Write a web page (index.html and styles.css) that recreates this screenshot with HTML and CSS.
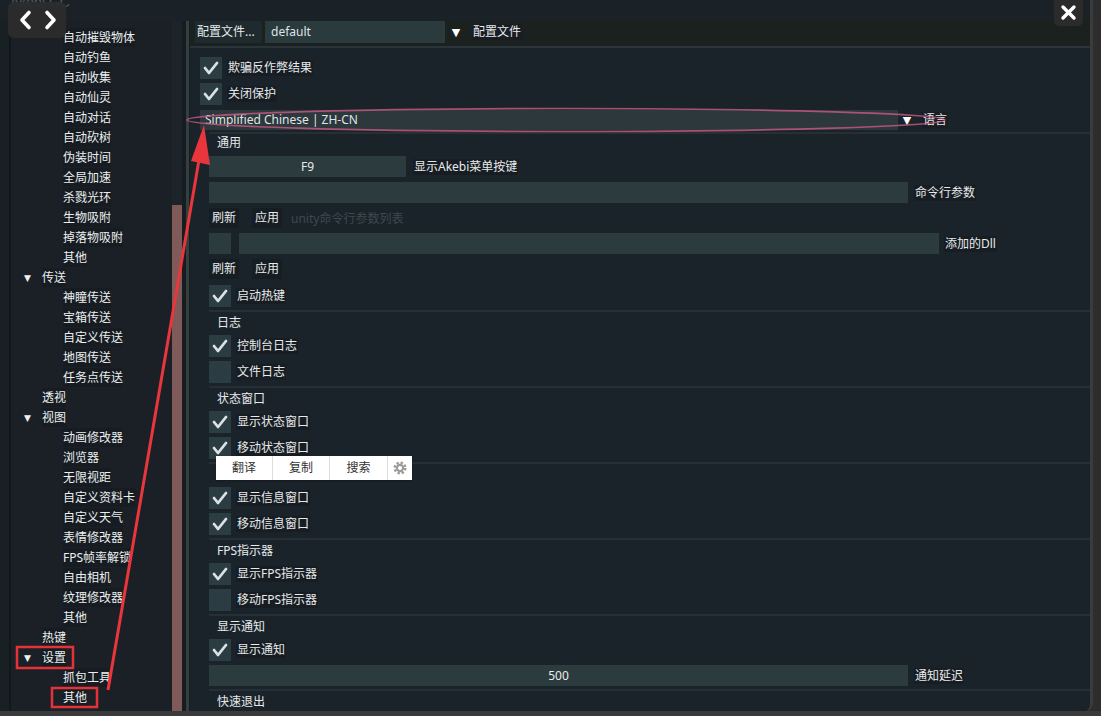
FILE: index.html
```html
<!DOCTYPE html>
<html lang="zh-CN">
<head>
<meta charset="utf-8">
<title>Akebi GC</title>
<link rel="stylesheet" href="styles.css">
</head>
<body>
<div class="window">
  <div class="titlebar"></div>
  <div class="main">
    <aside class="sidebar">
      <ul class="tree">
        <li class="l2"><span class="t">自动摧毁物体</span></li>
        <li class="l2"><span class="t">自动钓鱼</span></li>
        <li class="l2"><span class="t">自动收集</span></li>
        <li class="l2"><span class="t">自动仙灵</span></li>
        <li class="l2"><span class="t">自动对话</span></li>
        <li class="l2"><span class="t">自动砍树</span></li>
        <li class="l2"><span class="t">伪装时间</span></li>
        <li class="l2"><span class="t">全局加速</span></li>
        <li class="l2"><span class="t">杀戮光环</span></li>
        <li class="l2"><span class="t">生物吸附</span></li>
        <li class="l2"><span class="t">掉落物吸附</span></li>
        <li class="l2"><span class="t">其他</span></li>
        <li class="l1"><span class="tri">▼</span><span class="t">传送</span></li>
        <li class="l2"><span class="t">神瞳传送</span></li>
        <li class="l2"><span class="t">宝箱传送</span></li>
        <li class="l2"><span class="t">自定义传送</span></li>
        <li class="l2"><span class="t">地图传送</span></li>
        <li class="l2"><span class="t">任务点传送</span></li>
        <li class="l1 leaf"><span class="t">透视</span></li>
        <li class="l1"><span class="tri">▼</span><span class="t">视图</span></li>
        <li class="l2"><span class="t">动画修改器</span></li>
        <li class="l2"><span class="t">浏览器</span></li>
        <li class="l2"><span class="t">无限视距</span></li>
        <li class="l2"><span class="t">自定义资料卡</span></li>
        <li class="l2"><span class="t">自定义天气</span></li>
        <li class="l2"><span class="t">表情修改器</span></li>
        <li class="l2"><span class="t">FPS帧率解锁</span></li>
        <li class="l2"><span class="t">自由相机</span></li>
        <li class="l2"><span class="t">纹理修改器</span></li>
        <li class="l2"><span class="t">其他</span></li>
        <li class="l1 leaf"><span class="t">热键</span></li>
        <li class="l1"><span class="tri">▼</span><span class="t">设置</span></li>
        <li class="l2"><span class="t">抓包工具</span></li>
        <li class="l2 sel"><span class="t">其他</span></li>
      </ul>
    </aside>
    <div class="scroll"><div class="thumb"></div></div>
    <div class="splitter"></div>
    <section class="panel">
      <div class="profile-row">
        <span class="btn-dark">配置文件...</span>
        <span class="combo profile">default</span>
        <span class="arrow">▼</span>
        <span class="lbl">配置文件</span>
      </div>
      <div class="content">
        <div class="rows top">
          <div class="cb"><span class="box"><svg width="22" height="22" viewBox="0 0 22 22"><polyline points="5,11 9,16 17,6" fill="none" stroke="#dbe2e5" stroke-width="2.8" stroke-linecap="round" stroke-linejoin="round"/></svg></span><span class="lbl">欺骗反作弊结果</span></div>
          <div class="cb"><span class="box"><svg width="22" height="22" viewBox="0 0 22 22"><polyline points="5,11 9,16 17,6" fill="none" stroke="#dbe2e5" stroke-width="2.8" stroke-linecap="round" stroke-linejoin="round"/></svg></span><span class="lbl">关闭保护</span></div>
        </div>
        <div class="langrow">
          <span class="combo lang">Simplified Chinese | ZH-CN</span>
          <span class="arrow small">▼</span>
          <span class="lbl">语言</span>
        </div>

        <div class="sec general">
          <h3>通用</h3>
          <div class="rows g5">
            <div class="line">
              <span class="inp f9">F9</span><span class="lbl ml7">显示Akebi菜单按键</span>
            </div>
            <div class="line">
              <span class="inp wide"></span><span class="lbl ml6">命令行参数</span>
            </div>
            <div class="btnrow">
              <span class="btn">刷新</span><span class="btn">应用</span><span class="ph">unity命令行参数列表</span>
            </div>
            <div class="line">
              <span class="inp sq"></span><span class="inp wide2"></span><span class="lbl ml5">添加的Dll</span>
            </div>
            <div class="btnrow">
              <span class="btn">刷新</span><span class="btn">应用</span>
            </div>
            <div class="cb mt1"><span class="box"><svg width="22" height="22" viewBox="0 0 22 22"><polyline points="5,11 9,16 17,6" fill="none" stroke="#dbe2e5" stroke-width="2.8" stroke-linecap="round" stroke-linejoin="round"/></svg></span><span class="lbl">启动热键</span></div>
          </div>
        </div>

        <div class="sec">
          <h3>日志</h3>
          <div class="rows">
            <div class="cb"><span class="box"><svg width="22" height="22" viewBox="0 0 22 22"><polyline points="5,11 9,16 17,6" fill="none" stroke="#dbe2e5" stroke-width="2.8" stroke-linecap="round" stroke-linejoin="round"/></svg></span><span class="lbl">控制台日志</span></div>
            <div class="cb"><span class="box"></span><span class="lbl">文件日志</span></div>
          </div>
        </div>

        <div class="sec">
          <h3>状态窗口</h3>
          <div class="rows">
            <div class="cb"><span class="box"><svg width="22" height="22" viewBox="0 0 22 22"><polyline points="5,11 9,16 17,6" fill="none" stroke="#dbe2e5" stroke-width="2.8" stroke-linecap="round" stroke-linejoin="round"/></svg></span><span class="lbl">显示状态窗口</span></div>
            <div class="cb"><span class="box"><svg width="22" height="22" viewBox="0 0 22 22"><polyline points="5,11 9,16 17,6" fill="none" stroke="#dbe2e5" stroke-width="2.8" stroke-linecap="round" stroke-linejoin="round"/></svg></span><span class="lbl">移动状态窗口</span></div>
          </div>
        </div>

        <div class="sec">
          <h3></h3>
          <div class="rows">
            <div class="cb"><span class="box"><svg width="22" height="22" viewBox="0 0 22 22"><polyline points="5,11 9,16 17,6" fill="none" stroke="#dbe2e5" stroke-width="2.8" stroke-linecap="round" stroke-linejoin="round"/></svg></span><span class="lbl">显示信息窗口</span></div>
            <div class="cb"><span class="box"><svg width="22" height="22" viewBox="0 0 22 22"><polyline points="5,11 9,16 17,6" fill="none" stroke="#dbe2e5" stroke-width="2.8" stroke-linecap="round" stroke-linejoin="round"/></svg></span><span class="lbl">移动信息窗口</span></div>
          </div>
        </div>

        <div class="sec">
          <h3>FPS指示器</h3>
          <div class="rows">
            <div class="cb"><span class="box"><svg width="22" height="22" viewBox="0 0 22 22"><polyline points="5,11 9,16 17,6" fill="none" stroke="#dbe2e5" stroke-width="2.8" stroke-linecap="round" stroke-linejoin="round"/></svg></span><span class="lbl">显示FPS指示器</span></div>
            <div class="cb"><span class="box"></span><span class="lbl">移动FPS指示器</span></div>
          </div>
        </div>

        <div class="sec">
          <h3>显示通知</h3>
          <div class="rows">
            <div class="cb"><span class="box"><svg width="22" height="22" viewBox="0 0 22 22"><polyline points="5,11 9,16 17,6" fill="none" stroke="#dbe2e5" stroke-width="2.8" stroke-linecap="round" stroke-linejoin="round"/></svg></span><span class="lbl">显示通知</span></div>
            <div class="line">
              <span class="inp wide num">500</span><span class="lbl ml6">通知延迟</span>
            </div>
          </div>
        </div>

        <div class="sec">
          <h3>快速退出</h3>
        </div>
      </div>
    </section>
  </div>
</div>
<div class="bottombar"></div>

<div class="title-ghost">Akebi GC</div>
<div class="navbox">
  <svg width="58" height="36" viewBox="0 0 58 36">
    <polyline points="21,10.5 14,18 21,25.5" fill="none" stroke="#ffffff" stroke-width="3.6" stroke-linecap="round" stroke-linejoin="round"/>
    <polyline points="39,10.5 46,18 39,25.5" fill="none" stroke="#ffffff" stroke-width="3.6" stroke-linecap="round" stroke-linejoin="round"/>
  </svg>
</div>
<div class="closebtn">
  <svg width="29" height="26" viewBox="0 0 29 26">
    <line x1="9" y1="7" x2="20" y2="18" stroke="#ffffff" stroke-width="3.4" stroke-linecap="round"/>
    <line x1="20" y1="7" x2="9" y2="18" stroke="#ffffff" stroke-width="3.4" stroke-linecap="round"/>
  </svg>
</div>

<div class="ctxmenu">
  <span class="mi">翻译</span>
  <span class="mi">复制</span>
  <span class="mi w58">搜索</span>
  <span class="mi gear">
    <svg width="14" height="14" viewBox="0 0 14 14">
      <circle cx="7" cy="7" r="5.2" fill="none" stroke="#9c9c9c" stroke-width="2.6" stroke-dasharray="2.3 1.78"/>
      <circle cx="7" cy="7" r="4.2" fill="#9c9c9c"/>
      <circle cx="7" cy="7" r="2" fill="#ffffff"/>
    </svg>
  </span>
</div>

<svg class="annot" width="1101" height="716" viewBox="0 0 1101 716">
  <ellipse cx="566" cy="120" rx="379" ry="11.5" fill="none" stroke="#c0587f" stroke-width="1.6" opacity="0.85"/>
  <rect x="17" y="647" width="56" height="21" fill="none" stroke="#e53238" stroke-width="2.5"/>
  <rect x="52" y="688" width="45" height="19" fill="none" stroke="#e53238" stroke-width="2.5"/>
  <line x1="108" y1="690" x2="199" y2="160" stroke="#e8363c" stroke-width="3"/>
  <polygon points="204,125 210,165 191,161" fill="#e8363c"/>
</svg>
</body>
</html>
```

FILE: styles.css
```css
* { box-sizing: border-box; margin: 0; padding: 0; }

html, body { width: 1101px; height: 716px; }

body {
  background: #2d2d2d;
  overflow: hidden;
  position: relative;
  font-family: "Noto Sans", "Noto Sans CJK SC", sans-serif;
  font-size: 12px;
  color: #e6eaec;
}

.window {
  width: 1093px;
  height: 711px;
  background: #1b2329;
  border-right: 3px solid #3b3b3b;
  border-bottom-right-radius: 8px;
  display: flex;
  flex-direction: column;
  overflow: hidden;
}

.bottombar { height: 5px; background: #3a3a3a; }

.titlebar { height: 21px; flex: none; background: #1b2227; }

.main { flex: 1; display: flex; min-height: 0; }

/* sidebar tree */
.sidebar {
  width: 172px;
  flex: none;
  background: #1a2026;
  padding-top: 7px;
  box-shadow: inset 9px 0 0 #192024, inset 11px 0 0 #11171b;
}
.tree { list-style: none; }
.tree li { height: 20px; line-height: 20px; white-space: nowrap; }
.tree .l2 { padding-left: 63px; }
.tree .l1 { padding-left: 24px; }
.tree .l1.leaf { padding-left: 42px; }
.tree .tri { display: inline-block; width: 18px; font-size: 9px; font-family: "DejaVu Sans", sans-serif; color: #f0f0f0; vertical-align: top; }
.tree .t { background: #161c21; padding: 1px 0; color: #eceff0; }

.scroll { width: 10px; flex: none; background: #1d2429; display: flex; flex-direction: column; }
.scroll .thumb { margin-top: 184px; flex: 1; background: #7e5a59; }

.splitter {
  width: 8px;
  flex: none;
  background: linear-gradient(to right, #161c20 0 4px, #34403d 4px 7px, #161c20 7px);
}

/* main panel */
.panel { flex: 1; background: #1b232a; display: flex; flex-direction: column; min-width: 0; }

.profile-row {
  height: 27px;
  flex: none;
  padding: 1px 0 4px 5px;
  display: flex;
  align-items: center;
  background: #1a211f;
  border-bottom: 2px solid #2b343a;
}
.btn-dark {
  width: 67px;
  height: 22px;
  line-height: 22px;
  background: #1f2a2e;
  padding-left: 2px;
  white-space: nowrap;
}
.combo { display: block; white-space: nowrap; color: #dfe4e6; }
.combo.profile {
  width: 180px;
  height: 22px;
  line-height: 22px;
  margin-left: 3px;
  background: #2b3a3d;
  padding-left: 6px;
}
.arrow {
  width: 22px;
  text-align: center;
  font-size: 11px;
  font-family: "DejaVu Sans", sans-serif;
  color: #ffffff;
}
.arrow.small { width: 18px; }
.lbl { background: #171d22; padding: 0 1px; white-space: nowrap; line-height: 16px; }
.profile-row .lbl { margin-left: 5px; }

.content { padding-left: 10px; }

.rows { display: flex; flex-direction: column; gap: 4px; }
.rows.top { padding-top: 9px; }
.rows.g5 { gap: 5px; }

.cb { display: flex; align-items: center; height: 22px; gap: 5px; }
.cb.mt1 { margin-top: 1px; }
.box { width: 22px; height: 22px; background: #2c3c43; display: block; flex: none; }
.box svg { display: block; }

.langrow { display: flex; align-items: center; height: 20px; margin-top: 5px; }
.combo.lang {
  width: 698px;
  height: 20px;
  line-height: 20px;
  background: #2c383c;
  padding-left: 5px;
}
.langrow .lbl { margin-left: 6px; }

.sec {
  margin-left: 9px;
  margin-top: 3px;
  border-top: 2px solid #262f35;
  padding-top: 2px;
}
.sec h3 {
  height: 18px;
  line-height: 18px;
  padding-left: 8px;
  font-size: 12px;
  font-weight: normal;
  margin-bottom: 3px;
}
.sec.general { margin-top: 2px; padding-top: 1px; }
.sec.general h3 { height: 16px; line-height: 16px; margin-bottom: 5px; }

.line { display: flex; align-items: center; height: 21px; }
.inp { display: block; height: 21px; line-height: 21px; background: #2b3b3e; flex: none; }
.inp.f9 { width: 197px; text-align: center; }
.inp.wide { width: 699px; }
.inp.sq { width: 22px; }
.inp.wide2 { width: 700px; margin-left: 8px; }
.inp.num { text-align: center; color: #e8ecee; }
.ml7 { margin-left: 7px; }
.ml6 { margin-left: 6px; }
.ml5 { margin-left: 5px; }

.btnrow { display: flex; align-items: center; height: 20px; }
.btn { height: 20px; line-height: 20px; padding: 0 3px; background: #171e23; }
.btn + .btn { margin-left: 13px; }
.ph { margin-left: 9px; color: #3f484e; }

/* overlays */
.title-ghost {
  position: absolute;
  left: 10px;
  top: -6px;
  font-size: 14px;
  line-height: 16px;
  color: #50575c;
  font-family: "Liberation Sans", sans-serif;
}
.navbox {
  position: absolute;
  left: 8px;
  top: 2px;
  width: 58px;
  height: 36px;
  border-radius: 6px;
  background: rgba(44, 44, 44, 0.95);
}
.navbox svg { display: block; }
.closebtn {
  position: absolute;
  left: 1054px;
  top: 0;
  width: 29px;
  height: 26px;
  border-radius: 0 0 5px 5px;
  background: #2b2b2b;
}
.closebtn svg { display: block; }

.ctxmenu {
  position: absolute;
  left: 216px;
  top: 456px;
  width: 196px;
  height: 24px;
  background: #ffffff;
  display: flex;
  box-shadow: 0 1px 2px rgba(0, 0, 0, 0.3);
}
.ctxmenu .mi {
  width: 57px;
  height: 24px;
  line-height: 24px;
  text-align: center;
  color: #333333;
  border-right: 1px solid #dddddd;
}
.ctxmenu .mi.w58 { width: 58px; }
.ctxmenu .mi.gear {
  width: 24px;
  border-right: 0;
  display: flex;
  align-items: center;
  justify-content: center;
}

.annot { position: absolute; left: 0; top: 0; pointer-events: none; }
```
